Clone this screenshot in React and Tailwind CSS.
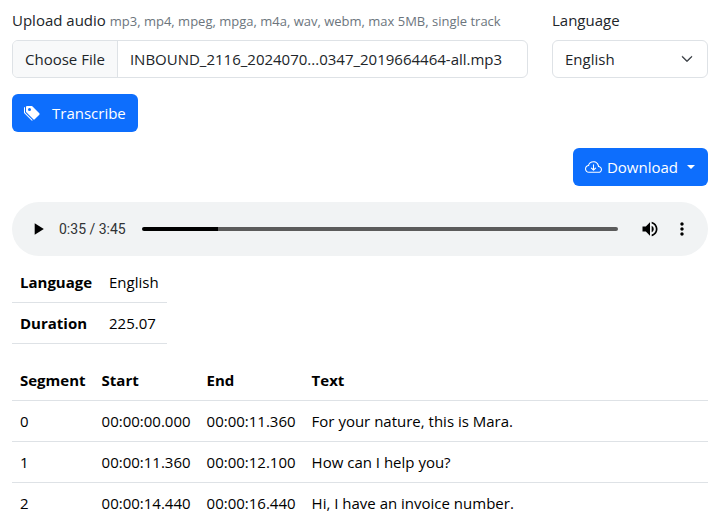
import React, { useState } from 'react';
import { BsTagsFill, BsCloudArrowDown, BsChevronDown } from 'react-icons/bs';
import { MdPlayArrow, MdPause, MdVolumeUp, MdMoreVert } from 'react-icons/md';

const segments = [
  { id: 0, start: '00:00:00.000', end: '00:00:11.360', text: 'For your nature, this is Mara.' },
  { id: 1, start: '00:00:11.360', end: '00:00:12.100', text: 'How can I help you?' },
  { id: 2, start: '00:00:14.440', end: '00:00:16.440', text: 'Hi, I have an invoice number.' },
];

const formatTime = (seconds) => {
  const mins = Math.floor(seconds / 60);
  const secs = Math.floor(seconds % 60);
  return `${mins}:${String(secs).padStart(2, '0')}`;
};

function AudioPlayer({ duration }) {
  const [time, setTime] = useState(35.99);
  const [playing, setPlaying] = useState(false);
  const percent = (time / duration) * 100;

  return (
    <div className="flex h-[54px] items-center rounded-full bg-[#f1f3f4] px-4 text-black">
      <button type="button" aria-label="Play" onClick={() => setPlaying(!playing)}>
        {playing ? <MdPause className="size-5" /> : <MdPlayArrow className="size-5" />}
      </button>
      <span className="ml-[11px] font-['Roboto',sans-serif] text-sm text-[#303234]">
        {formatTime(time)} / {formatTime(duration)}
      </span>
      <input
        type="range"
        aria-label="Seek"
        min="0"
        max={duration}
        step="any"
        value={time}
        onChange={(e) => setTime(Number(e.target.value))}
        className="mr-[22px] ml-4 h-1 min-w-0 flex-1 cursor-pointer appearance-none rounded-full [&::-webkit-slider-thumb]:size-1 [&::-webkit-slider-thumb]:appearance-none"
        style={{ background: `linear-gradient(to right, #000 ${percent}%, #5b5b5b ${percent}%)` }}
      />
      <button type="button" aria-label="Mute">
        <MdVolumeUp className="size-5" />
      </button>
      <button type="button" aria-label="More options" className="ml-3">
        <MdMoreVert className="size-5" />
      </button>
    </div>
  );
}

function App() {
  const [fileName, setFileName] = useState('INBOUND_2116_2024070...0347_2019664464-all.mp3');
  const [language, setLanguage] = useState('English');

  const handleFile = (e) => {
    if (e.target.files.length) {
      setFileName(e.target.files[0].name);
    }
  };

  return (
    <div className="bg-white px-3 pt-2 font-['Open_Sans','Noto_Sans',sans-serif] text-[15px] leading-6 text-[#212529]">
      <form onSubmit={(e) => e.preventDefault()}>
        <div className="grid grid-cols-4 gap-6">
          <div className="col-span-3">
            <label htmlFor="audio" className="mb-2 block whitespace-nowrap">
              Upload audio{' '}
              <small className="text-[13px] leading-none text-[#6c757d]">
                mp3, mp4, mpeg, mpga, m4a, wav, webm, max 5MB, single track
              </small>
            </label>
            <label className="flex h-[38px] cursor-pointer items-center overflow-hidden rounded-md border border-[#dee2e6]">
              <input id="audio" type="file" accept="audio/*" className="sr-only" onChange={handleFile} />
              <span className="flex h-full shrink-0 items-center border-r border-[#dee2e6] bg-[#f8f9fa] px-3">
                Choose File
              </span>
              <span className="truncate px-3">{fileName}</span>
            </label>
          </div>
          <div>
            <label htmlFor="language" className="mb-2 block">Language</label>
            <div className="relative">
              <select
                id="language"
                value={language}
                onChange={(e) => setLanguage(e.target.value)}
                className="h-[38px] w-full appearance-none rounded-md border border-[#dee2e6] bg-white pr-9 pl-3"
              >
                <option>English</option>
                <option>Spanish</option>
                <option>French</option>
              </select>
              <BsChevronDown className="pointer-events-none absolute inset-y-0 right-[15px] my-auto size-3 stroke-[#343a40] stroke-1" />
            </div>
          </div>
        </div>
        <button
          type="submit"
          className="mt-4 flex h-[38px] items-center gap-3 rounded-md bg-[#0d6efd] px-3 text-white hover:bg-[#0b5ed7]"
        >
          <BsTagsFill className="size-4" />
          Transcribe
        </button>
      </form>

      <div className="mt-4 mb-4 flex justify-end">
        <button
          type="button"
          className="flex h-[38px] items-center rounded-md bg-[#0d6efd] px-3 text-white hover:bg-[#0b5ed7]"
        >
          <BsCloudArrowDown className="mr-[5px] size-[17px]" />
          Download
          <span className="mr-px ml-[9px] border-x-4 border-t-4 border-x-transparent border-t-white" />
        </button>
      </div>

      <AudioPlayer duration={225.07} />

      <table className="mt-[6px] text-left text-black">
        <tbody>
          <tr className="border-b border-[#dee2e6]">
            <th className="w-[89px] p-2 font-bold">Language</th>
            <td className="p-2">English</td>
          </tr>
          <tr className="border-b border-[#dee2e6]">
            <th className="p-2 font-bold">Duration</th>
            <td className="p-2">225.07</td>
          </tr>
        </tbody>
      </table>

      <table className="mt-4 w-full text-left text-black">
        <thead>
          <tr className="border-b border-[#dee2e6]">
            <th className="p-2">Segment</th>
            <th className="p-2">Start</th>
            <th className="p-2">End</th>
            <th className="w-full p-2">Text</th>
          </tr>
        </thead>
        <tbody>
          {segments.map((segment) => (
            <tr key={segment.id} className="border-b border-[#dee2e6]">
              <td className="p-2">{segment.id}</td>
              <td className="p-2">{segment.start}</td>
              <td className="p-2">{segment.end}</td>
              <td className="p-2">{segment.text}</td>
            </tr>
          ))}
        </tbody>
      </table>
    </div>
  );
}

export default App;
